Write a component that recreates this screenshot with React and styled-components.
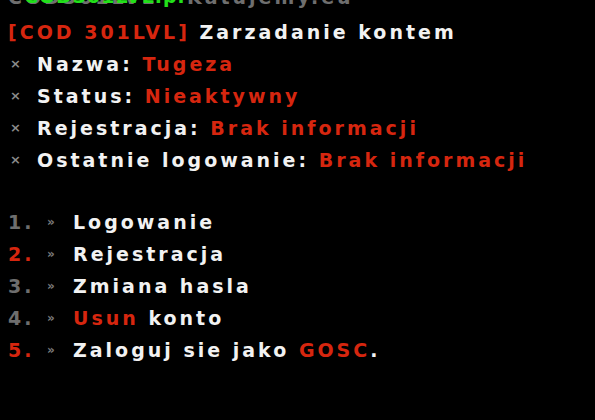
import React from 'react'
import styled, { createGlobalStyle } from 'styled-components'

const Global = createGlobalStyle`
  html, body {
    margin: 0;
    padding: 0;
    background: #000;
  }
  body {
    width: 595px;
    height: 420px;
    overflow: hidden;
    font-family: "DejaVu Sans", Verdana, sans-serif;
  }
`

const Screen = styled.div`
  width: 595px;
  height: 420px;
  background: #000;
  overflow: hidden;
`

const TopStrip = styled.div`
  position: relative;
  height: 8px;
  overflow: hidden;
  padding-left: 8px;
`

const TopText = styled.div`
  margin-top: -14px;
  font-size: 19px;
  font-weight: bold;
  letter-spacing: 3px;
  line-height: 22px;
  color: #6e6e6e;
  white-space: nowrap;
`

const TopGlow = styled.div`
  position: absolute;
  left: 24px;
  top: -15px;
  font-size: 19px;
  font-weight: bold;
  letter-spacing: 1px;
  line-height: 22px;
  color: #22e01a;
  white-space: nowrap;
`

const Menu = styled.div`
  padding: 8px 0 0 8px;
  font-size: 19px;
  font-weight: bold;
  letter-spacing: 3px;
  color: #f2f2f2;
`

const Line = styled.div`
  height: 32px;
  line-height: 32px;
  white-space: nowrap;
  display: flex;
  align-items: center;
`

const Gap = styled.div`
  height: 30px;
`

const Red = styled.span`
  color: #d6260f;
`

const Cross = styled.span`
  width: 27px;
  padding-left: 2px;
  font-size: 13px;
  letter-spacing: 0;
  color: #8a8a8a;
`

const Num = styled.span`
  width: 39px;
  color: ${p => (p.$red ? '#d6260f' : '#6e6e6e')};
`

const Arrow = styled.span`
  width: 26px;
  font-size: 12px;
  letter-spacing: 0;
  color: #7a7a7a;
`

const info = [
  ['Nazwa', 'Tugeza'],
  ['Status', 'Nieaktywny'],
  ['Rejestracja', 'Brak informacji'],
  ['Ostatnie logowanie', 'Brak informacji'],
]

const items = [
  { red: false, text: <>Logowanie</> },
  { red: true, text: <>Rejestracja</> },
  { red: false, text: <>Zmiana hasla</> },
  { red: false, text: <><Red>Usun</Red> konto</> },
  { red: true, text: <>Zaloguj sie jako <Red>GOSC</Red>.</> },
]

export default function App() {
  return (
    <Screen>
      <Global />
      <TopStrip>
        <TopText>COD301LVL - Katujemy.eu</TopText>
        <TopGlow>COD301LVL.pl</TopGlow>
      </TopStrip>
      <Menu>
        <Line>
          <Red>[COD 301LVL]</Red>&nbsp;Zarzadanie kontem
        </Line>
        {info.map(([label, value]) => (
          <Line key={label}>
            <Cross>×</Cross>
            {label}:&nbsp;<Red>{value}</Red>
          </Line>
        ))}
        <Gap />
        {items.map((it, i) => (
          <Line key={i}>
            <Num $red={it.red}>{i + 1}.</Num>
            <Arrow>»</Arrow>
            <span>{it.text}</span>
          </Line>
        ))}
      </Menu>
    </Screen>
  )
}
